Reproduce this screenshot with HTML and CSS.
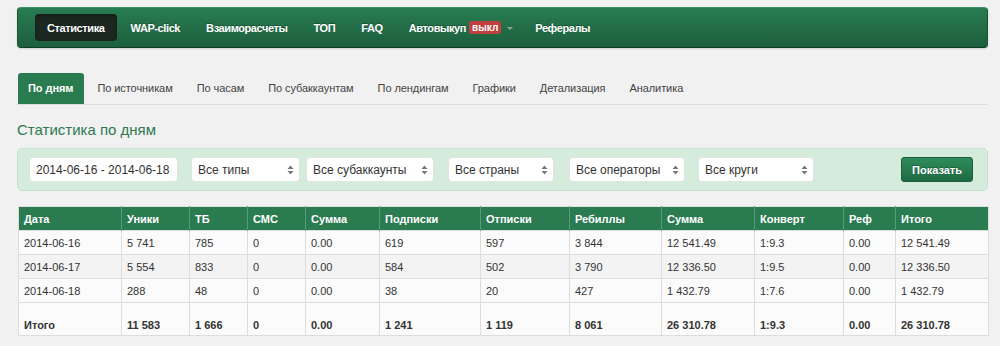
FILE: index.html
```html
<!DOCTYPE html>
<html lang="ru">
<head>
  <meta charset="UTF-8">
  <title>Статистика по дням</title>
  <link rel="stylesheet" href="styles.css">
</head>
<body>
  <div class="page">
    <div class="navbar">
      <a class="nav-item active" href="#">Статистика</a>
      <a class="nav-item" href="#">WAP-click</a>
      <a class="nav-item" href="#">Взаиморасчеты</a>
      <a class="nav-item" href="#">ТОП</a>
      <a class="nav-item" href="#">FAQ</a>
      <a class="nav-item dropdown" href="#">Автовыкуп <span class="badge">выкл</span><span class="caret"></span></a>
      <a class="nav-item" href="#">Рефералы</a>
    </div>

    <div class="tabs">
      <a class="tab active" href="#">По дням</a>
      <a class="tab" href="#">По источникам</a>
      <a class="tab" href="#">По часам</a>
      <a class="tab" href="#">По субаккаунтам</a>
      <a class="tab" href="#">По лендингам</a>
      <a class="tab" href="#">Графики</a>
      <a class="tab" href="#">Детализация</a>
      <a class="tab" href="#">Аналитика</a>
    </div>

    <h2 class="title">Статистика по дням</h2>

    <div class="filters">
      <div class="field date">2014-06-16 - 2014-06-18</div>
      <div class="field select w-types">Все типы <svg class="arrows" width="7" height="10" viewBox="0 0 7 10"><path d="M3.5 0.5 L6.5 4 H0.5 Z M3.5 9.5 L6.5 6 H0.5 Z" fill="#777"/></svg></div>
      <div class="field select w-subs">Все субаккаунты <svg class="arrows" width="7" height="10" viewBox="0 0 7 10"><path d="M3.5 0.5 L6.5 4 H0.5 Z M3.5 9.5 L6.5 6 H0.5 Z" fill="#777"/></svg></div>
      <div class="field select w-countries">Все страны <svg class="arrows" width="7" height="10" viewBox="0 0 7 10"><path d="M3.5 0.5 L6.5 4 H0.5 Z M3.5 9.5 L6.5 6 H0.5 Z" fill="#777"/></svg></div>
      <div class="field select w-ops">Все операторы <svg class="arrows" width="7" height="10" viewBox="0 0 7 10"><path d="M3.5 0.5 L6.5 4 H0.5 Z M3.5 9.5 L6.5 6 H0.5 Z" fill="#777"/></svg></div>
      <div class="field select w-circles">Все круги <svg class="arrows" width="7" height="10" viewBox="0 0 7 10"><path d="M3.5 0.5 L6.5 4 H0.5 Z M3.5 9.5 L6.5 6 H0.5 Z" fill="#777"/></svg></div>
      <button class="btn-show">Показать</button>
    </div>

    <table class="stats">
      <colgroup>
        <col style="width:103px"><col style="width:68px"><col style="width:58px"><col style="width:58px">
        <col style="width:74px"><col style="width:101px"><col style="width:89px"><col style="width:92px">
        <col style="width:93px"><col style="width:89px"><col style="width:52px"><col style="width:93px">
      </colgroup>
      <thead>
        <tr>
          <th>Дата</th><th>Уники</th><th>ТБ</th><th>СМС</th><th>Сумма</th><th>Подписки</th>
          <th>Отписки</th><th>Ребиллы</th><th>Сумма</th><th>Конверт</th><th>Реф</th><th>Итого</th>
        </tr>
      </thead>
      <tbody>
        <tr>
          <td>2014-06-16</td><td>5 741</td><td>785</td><td>0</td><td>0.00</td><td>619</td>
          <td>597</td><td>3 844</td><td>12 541.49</td><td>1:9.3</td><td>0.00</td><td>12 541.49</td>
        </tr>
        <tr>
          <td>2014-06-17</td><td>5 554</td><td>833</td><td>0</td><td>0.00</td><td>584</td>
          <td>502</td><td>3 790</td><td>12 336.50</td><td>1:9.5</td><td>0.00</td><td>12 336.50</td>
        </tr>
        <tr>
          <td>2014-06-18</td><td>288</td><td>48</td><td>0</td><td>0.00</td><td>38</td>
          <td>20</td><td>427</td><td>1 432.79</td><td>1:7.6</td><td>0.00</td><td>1 432.79</td>
        </tr>
      </tbody>
      <tfoot>
        <tr>
          <td>Итого</td><td>11 583</td><td>1 666</td><td>0</td><td>0.00</td><td>1 241</td>
          <td>1 119</td><td>8 061</td><td>26 310.78</td><td>1:9.3</td><td>0.00</td><td>26 310.78</td>
        </tr>
      </tfoot>
    </table>
  </div>
</body>
</html>
```

FILE: styles.css
```css
* {
  box-sizing: border-box;
  margin: 0;
  padding: 0;
}

body {
  background: #f1f1f1;
  font-family: 'Liberation Sans', Arial, sans-serif;
  font-size: 11px;
  color: #333;
}

a {
  text-decoration: none;
}

.page {
  width: 971px;
  margin-left: 17px;
  padding-top: 7px;
}

/* Top navigation */
.navbar {
  display: flex;
  align-items: center;
  height: 41px;
  padding-left: 17px;
  background: linear-gradient(#287c52, #1d5e3c);
  border: 1px solid #1a5636;
  border-top-color: #3c9466;
  border-bottom-color: #0f3f25;
  border-radius: 4px;
  box-shadow: 0 1px 2px rgba(0, 0, 0, 0.15);
}

.nav-item {
  display: flex;
  align-items: center;
  height: 27px;
  margin-right: 2px;
  padding: 0 12px;
  color: #fff;
  font-weight: bold;
  font-size: 11px;
  letter-spacing: -0.4px;
  text-shadow: 0 -1px 0 rgba(0, 0, 0, 0.25);
  border-radius: 4px;
}

.nav-item.active {
  background: #1d2822;
  box-shadow: inset 0 2px 4px rgba(0, 0, 0, 0.3);
}

.nav-item.dropdown {
  padding-right: 8px;
}

.badge {
  display: inline-block;
  height: 13px;
  margin-left: 3px;
  padding: 0 3px;
  background: #c0403f;
  border-radius: 3px;
  font-size: 10px;
  line-height: 13px;
  letter-spacing: 0;
  text-shadow: none;
}

.caret {
  display: inline-block;
  margin-left: 6px;
  margin-top: 2px;
  border-left: 3px solid transparent;
  border-right: 3px solid transparent;
  border-top: 3px solid #82ab96;
}

/* Tabs */
.tabs {
  display: flex;
  margin-top: 25px;
  border-bottom: 1px solid #dcdcdc;
}

.tab {
  height: 31px;
  line-height: 31px;
  padding: 0 12px;
  color: #444;
  font-size: 11px;
  letter-spacing: -0.07px;
}

.tab.active {
  margin-left: 1px;
  margin-right: 1px;
  padding: 0 11px 0 10px;
  background: #2b7b51;
  color: #fff;
  font-weight: bold;
  border-radius: 3px 3px 0 0;
}

.title {
  margin-top: 16px;
  font-size: 15px;
  font-weight: normal;
  color: #2e7a52;
  line-height: 18px;
}

/* Filter panel */
.filters {
  display: flex;
  align-items: center;
  height: 43px;
  margin-top: 9px;
  padding: 0 11px;
  background: #d5ecdd;
  border: 1px solid #c4e2cf;
  border-radius: 5px;
}

.field {
  display: flex;
  align-items: center;
  height: 25px;
  padding: 0 6px;
  background: #fff;
  border: 1px solid #dde5df;
  border-radius: 4px;
  font-size: 12px;
  color: #333;
}

.date {
  width: 149px;
  margin-right: 13px;
}

.select {
  justify-content: space-between;
  padding-right: 5px;
}

.w-types { width: 109px; margin-right: 6px; }
.w-subs { width: 128px; margin-right: 14px; }
.w-countries { width: 106px; margin-right: 15px; }
.w-ops { width: 116px; margin-right: 13px; }
.w-circles { width: 116px; }

.btn-show {
  margin-left: auto;
  margin-right: 3px;
  height: 25px;
  padding: 0 10px;
  background: linear-gradient(#2f8c5b, #1f6a43);
  border: 1px solid #1b5e3b;
  border-radius: 3px;
  color: #fff;
  font-family: inherit;
  font-size: 11px;
  font-weight: bold;
  text-shadow: 0 -1px 0 rgba(0, 0, 0, 0.25);
}

/* Table */
.stats {
  width: 970px;
  margin-top: 15px;
  margin-left: 1px;
  table-layout: fixed;
  border-collapse: collapse;
  border: 1px solid #dddddd;
  background: #fbfbfb;
}

.stats th {
  height: 24px;
  padding: 0 5px;
  background: #2b7b51;
  color: #fff;
  font-weight: bold;
  text-align: left;
  border-left: 1px solid #5a9a78;
}

.stats th:first-child {
  border-left: none;
}

.stats td {
  height: 24px;
  padding: 0 5px;
  border: 1px solid #dddddd;
}

.stats tbody tr:nth-child(even) td {
  background: #f3f3f3;
}

.stats tfoot td {
  height: 33px;
  padding-top: 11px;
  font-weight: bold;
}
```
